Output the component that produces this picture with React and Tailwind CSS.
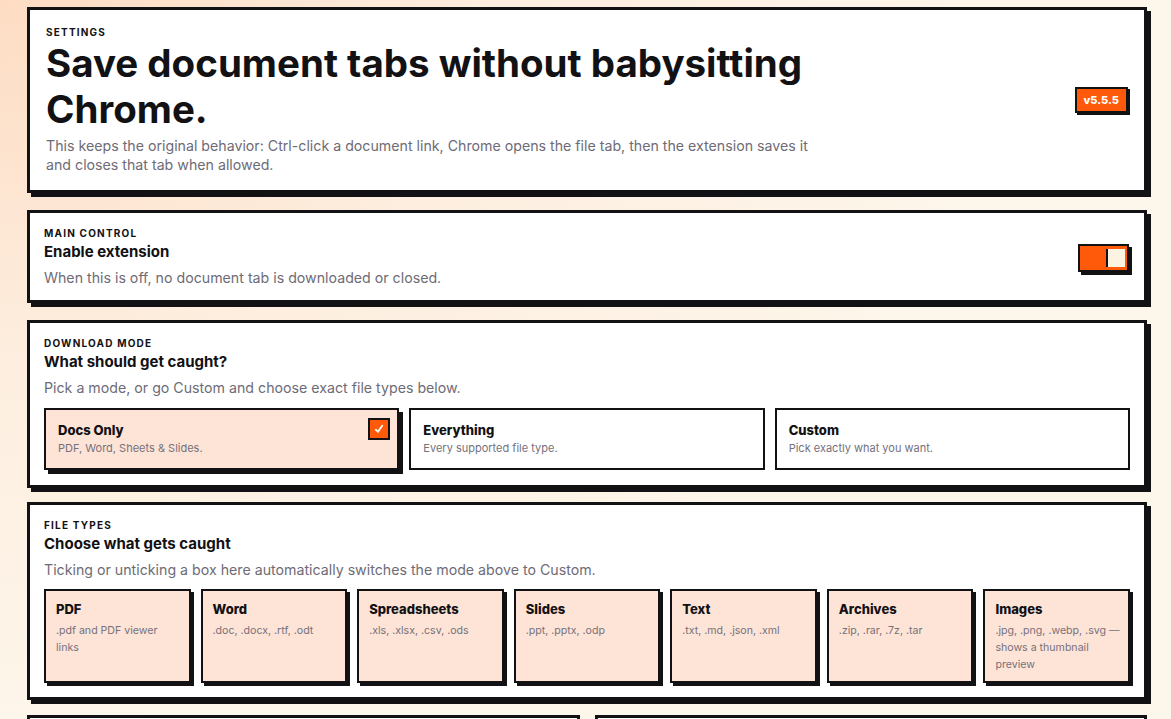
const modes = [
  { id: "docs", title: "Docs Only", desc: "PDF, Word, Sheets & Slides." },
  { id: "all", title: "Everything", desc: "Every supported file type." },
  { id: "custom", title: "Custom", desc: "Pick exactly what you want." },
];

const fileTypes = [
  { title: "PDF", desc: ".pdf and PDF viewer links" },
  { title: "Word", desc: ".doc, .docx, .rtf, .odt" },
  { title: "Spreadsheets", desc: ".xls, .xlsx, .csv, .ods" },
  { title: "Slides", desc: ".ppt, .pptx, .odp" },
  { title: "Text", desc: ".txt, .md, .json, .xml" },
  { title: "Archives", desc: ".zip, .rar, .7z, .tar" },
  { title: "Images", desc: ".jpg, .png, .webp, .svg — shows a thumbnail preview" },
];

const Card = ({ children, className = "" }) => (
  <section
    className={`bg-white border-[3px] border-[#121114] shadow-[4px_4px_0_#121114] ${className}`}
  >
    {children}
  </section>
);

const Label = ({ children }) => (
  <div className="text-[10px] leading-[13px] font-bold uppercase tracking-[0.12em] text-[#121114]">
    {children}
  </div>
);

const SectionHead = ({ label, title, desc }) => (
  <>
    <Label>{label}</Label>
    <h2 className="mt-0.5 text-[15px] leading-[20px] font-bold text-[#121114]">{title}</h2>
    <p className="mt-[6px] text-[14.2px] leading-[20px] text-[#6e6b76]">{desc}</p>
  </>
);

const Check = () => (
  <span className="absolute top-2 right-[7px] w-[22px] h-[22px] bg-[#ff5a0a] border-2 border-[#121114] flex items-center justify-center">
    <svg width="12" height="12" viewBox="0 0 12 12" fill="none">
      <path d="M2.8 6.6 L5 8.8 L9.2 2.8" stroke="white" strokeWidth="1.8" strokeLinecap="round" strokeLinejoin="round" />
    </svg>
  </span>
);

export default function App() {
  const mode = "docs";

  return (
    <div
      className="min-h-screen pt-[7px] pl-[27px] pr-[24px] pb-10 bg-[radial-gradient(ellipse_at_top_left,#fddcc3_0%,#fdeedf_30%,#fdf6ea_60%)]"
      style={{ fontFamily: "Inter, 'Liberation Sans', sans-serif" }}
    >
      <div className="w-[1120px] flex flex-col">
        <Card className="px-4 pt-4 pb-[16px] flex items-center justify-between">
          <div className="w-[800px]">
            <Label>Settings</Label>
            <h1 className="mt-[1px] text-[38.5px] leading-[46px] font-bold text-[#121114] max-w-[790px]">
              Save document tabs without babysitting Chrome.
            </h1>
            <p className="mt-1 text-[14.2px] leading-[19px] text-[#6e6b76] max-w-[780px]">
              This keeps the original behavior: Ctrl-click a document link, Chrome opens the file tab, then the extension saves it and closes that tab when allowed.
            </p>
          </div>
          <span className="bg-[#ff5a0a] text-white text-[11px] font-extrabold px-[7px] py-[3px] border-2 border-[#121114] shadow-[2px_2px_0_#121114]">
            v5.5.5
          </span>
        </Card>

        <Card className="mt-[17px] px-[14px] pt-[14px] pb-[12px] flex items-center justify-between">
          <div>
            <SectionHead
              label="Main control"
              title="Enable extension"
              desc="When this is off, no document tab is downloaded or closed."
            />
          </div>
          <div className="mr-[1px] w-[51px] h-[28px] bg-[#ff5a0a] border-2 border-[#121114] shadow-[3px_3px_0_#121114] flex justify-end items-center p-[2px]">
            <span className="w-[19px] h-[18px] bg-[#fdf3e3] border-l-2 border-[#121114]" />
          </div>
        </Card>

        <Card className="mt-[17px] p-[14px] pb-[15px]">
          <SectionHead
            label="Download mode"
            title="What should get caught?"
            desc="Pick a mode, or go Custom and choose exact file types below."
          />
          <div className="mt-[10px] grid grid-cols-3 gap-[10px]">
            {modes.map((m) => {
              const active = m.id === mode;
              return (
                <div
                  key={m.id}
                  className={`relative h-[62px] border-2 border-[#121114] px-3 pt-[11px] ${
                    active ? "bg-[#fee4d6] shadow-[4px_4px_0_#121114]" : "bg-white"
                  }`}
                >
                  <div className="text-[13px] leading-[18px] font-extrabold text-[#121114]">{m.title}</div>
                  <div className="mt-[1px] text-[11px] leading-[16px] text-[#75717c]">{m.desc}</div>
                  {active && <Check />}
                </div>
              );
            })}
          </div>
        </Card>

        <Card className="mt-[14px] p-[14px]">
          <SectionHead
            label="File types"
            title="Choose what gets caught"
            desc="Ticking or unticking a box here automatically switches the mode above to Custom."
          />
          <div className="mt-[9px] grid grid-cols-7 gap-[10px]">
            {fileTypes.map((t) => (
              <div
                key={t.title}
                className="bg-[#fee4d6] border-2 border-[#121114] shadow-[3px_3px_0_#121114] pl-[10px] pr-[6px] pt-[9px] pb-[8px]"
              >
                <div className="text-[13px] leading-[18px] font-extrabold text-[#121114]">{t.title}</div>
                <div className="mt-[4px] text-[10.6px] leading-[17px] text-[#75717c]">{t.desc}</div>
              </div>
            ))}
          </div>
        </Card>

        <div className="mt-[15px] grid grid-cols-2 gap-[15px]">
          <Card className="p-[14px]">
            <SectionHead label="Behavior" title="After saving" desc="Close the tab once the download finishes." />
          </Card>
          <Card className="p-[14px]">
            <SectionHead label="Activity" title="Recent saves" desc="Nothing saved yet." />
          </Card>
        </div>
      </div>
    </div>
  );
}
